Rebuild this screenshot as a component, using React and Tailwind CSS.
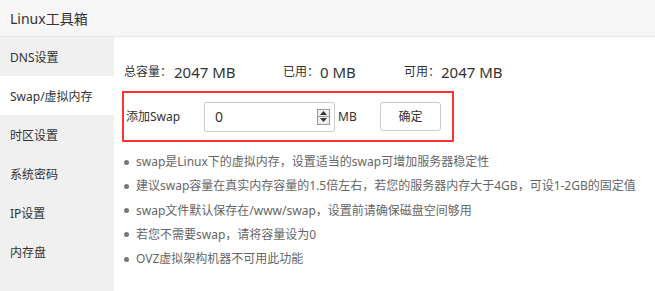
import React from "react";

const font = { fontFamily: '"Noto Sans", "Noto Sans CJK SC", sans-serif' };

export default function App() {
  const menu = ["DNS设置", "Swap/虚拟内存", "时区设置", "系统密码", "IP设置", "内存盘"];
  const tips = [
    "swap是Linux下的虚拟内存，设置适当的swap可增加服务器稳定性",
    "建议swap容量在真实内存容量的1.5倍左右，若您的服务器内存大于4GB，可设1-2GB的固定值",
    "swap文件默认保存在/www/swap，设置前请确保磁盘空间够用",
    "若您不需要swap，请将容量设为0",
    "OVZ虚拟架构机器不可用此功能",
  ];
  return (
    <div className="w-[655px] h-[291px] bg-white flex flex-col overflow-hidden" style={font}>
      <div className="h-[37px] shrink-0 bg-[#f6f6f6] border-b border-[#e6e6e6] flex items-center pl-[10px] text-[14px] text-[#333]">
        Linux工具箱
      </div>
      <div className="flex flex-1">
        <div className="w-[114px] shrink-0 bg-[#f0f0f0] flex flex-col">
          {menu.map((m, i) => (
            <div
              key={m}
              className={`h-[39px] flex items-center pl-[10px] pt-[2px] text-[12px] text-[#333] ${i === 1 ? "bg-white" : ""}`}
            >
              {m}
            </div>
          ))}
        </div>
        <div className="flex-1 pl-[8px] pt-[24px]">
          <div className="flex items-center h-[22px] text-[#333]">
            <span className="text-[12px] ml-[2px] w-[48px] whitespace-nowrap">总容量：</span>
            <span className="text-[15px] ml-[2px] w-[109px]">2047 MB</span>
            <span className="text-[12px] w-[36px] whitespace-nowrap">已用：</span>
            <span className="text-[15px] ml-[1px] w-[84px]">0 MB</span>
            <span className="text-[12px] w-[36px] whitespace-nowrap">可用：</span>
            <span className="text-[15px] ml-[1px]">2047 MB</span>
          </div>
          <div className="mt-[8px] w-[332px] h-[51px] border-2 border-[#f33] flex items-center text-[#333]">
            <span className="text-[12px] ml-[2px] w-[78px]">添加Swap</span>
            <div className="w-[131px] h-[30px] border border-[#ccc] rounded-[2px] flex items-center justify-between pl-[10px] pr-[4px] text-[14px]">
              <span>0</span>
              <div className="w-[13px] h-[16px] border border-[#999] bg-[#eee] flex flex-col">
                <div className="flex-1 flex items-center justify-center border-b border-[#999]">
                  <svg width="7" height="4" viewBox="0 0 7 4"><path d="M0 4 L3.5 0 L7 4 Z" fill="#333" /></svg>
                </div>
                <div className="flex-1 flex items-center justify-center">
                  <svg width="7" height="4" viewBox="0 0 7 4"><path d="M0 0 L3.5 4 L7 0 Z" fill="#333" /></svg>
                </div>
              </div>
            </div>
            <span className="text-[12px] ml-[3px] w-[42px]">MB</span>
            <button className="w-[61px] h-[29px] border border-[#ccc] rounded-[3px] bg-white text-[12px] text-[#333]">
              确定
            </button>
          </div>
          <ul className="mt-[8px] text-[12px] text-[#666]">
            {tips.map((t) => (
              <li key={t} className="h-[24.25px] flex items-center">
                <span className="w-[5px] h-[5px] rounded-full bg-[#777] ml-[2px] mr-[7px] shrink-0" />
                <span className="whitespace-nowrap">{t}</span>
              </li>
            ))}
          </ul>
        </div>
      </div>
    </div>
  );
}
